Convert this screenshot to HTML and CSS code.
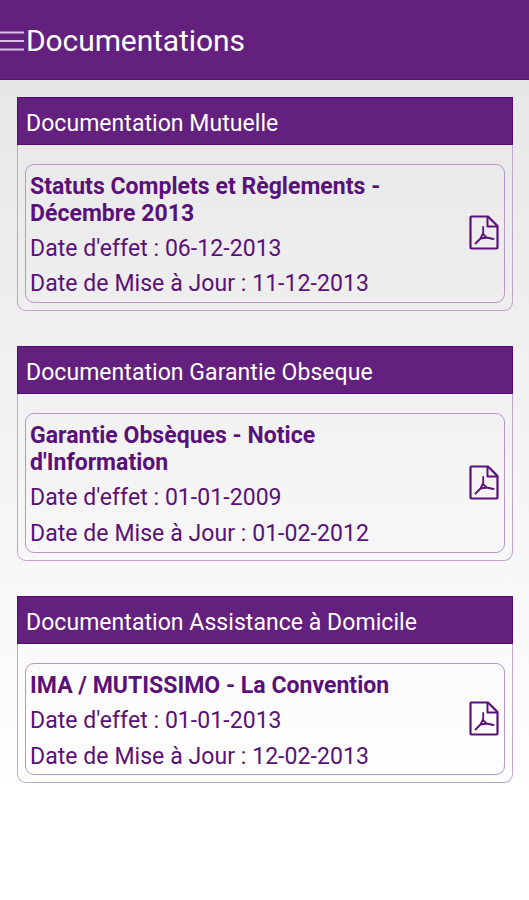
FILE: index.html
```
<!DOCTYPE html>
<html lang="fr">
<head>
    <meta charset="utf-8">
    <title>Documentations</title>
    <link rel="stylesheet" href="styles.css">
</head>
<body>
    <!-- PDF icon shared by all documents -->
    <svg class="sprite" width="0" height="0">
        <symbol id="pdf" viewBox="0 0 30 35">
            <path d="M2.500 1.500H19L28.500 11V32.500Q28.500 33.500 27.500 33.500H2.500Q1.500 33.500 1.500 32.500V2.500Q1.500 1.500 2.500 1.500Z" stroke-width="2.2"/>
            <path d="M18.500 2V11.500H28" stroke-width="2"/>
            <path d="M14.200 12V18L11.500 23.500L6.500 28.500M14.500 19.500L17.500 22.500L24.500 24M11.500 23.500L17.500 22.500" stroke-width="1.800" stroke-linecap="round"/>
        </symbol>
    </svg>

    <header class="topbar">
        <svg class="menu" width="24" height="22" viewBox="0 0 24 22">
            <path d="M0 2.500H24M0 11H24M0 19.500H24"/>
        </svg>
        <h1>Documentations</h1>
    </header>

    <main class="list">
        <section class="card">
            <h2>Documentation Mutuelle</h2>
            <div class="doc">
                <div class="doc-text">
                    <h3>Statuts Complets et Règlements -<br>Décembre 2013</h3>
                    <p>Date d'effet : 06-12-2013</p>
                    <p>Date de Mise à Jour : 11-12-2013</p>
                </div>
                <svg class="pdf"><use href="#pdf"/></svg>
            </div>
        </section>

        <section class="card">
            <h2>Documentation Garantie Obseque</h2>
            <div class="doc">
                <div class="doc-text">
                    <h3>Garantie Obsèques - Notice<br>d'Information</h3>
                    <p>Date d'effet : 01-01-2009</p>
                    <p>Date de Mise à Jour : 01-02-2012</p>
                </div>
                <svg class="pdf"><use href="#pdf"/></svg>
            </div>
        </section>

        <section class="card">
            <h2>Documentation Assistance à Domicile</h2>
            <div class="doc">
                <div class="doc-text">
                    <h3>IMA / MUTISSIMO - La Convention</h3>
                    <p>Date d'effet : 01-01-2013</p>
                    <p>Date de Mise à Jour : 12-02-2013</p>
                </div>
                <svg class="pdf"><use href="#pdf"/></svg>
            </div>
        </section>
    </main>
</body>
</html>
```

FILE: styles.css
```
* {
    box-sizing: border-box;
}
body {
    margin: 0;
    height: 900px;
    overflow: hidden;
    font-family: Roboto, sans-serif;
    color: #5a1079;
    background: linear-gradient(#e7e7e7 80px, #ffffff 800px);
}
h1, h2, h3, p {
    margin: 0;
    white-space: nowrap;
}
.sprite {
    position: absolute;
}
.topbar {
    display: flex;
    align-items: center;
    height: 80px;
    padding-top: 2px;
    background-color: #64207f;
    border-bottom: 1px solid #5a1376;
    color: #ffffff;
}
.topbar h1 {
    margin-left: 2px;
    font-size: 30px;
    font-weight: 400;
    letter-spacing: -0.1px;
}
.menu {
    fill: none;
    stroke: #d9bfe3;
    stroke-width: 2;
}
.list {
    display: flex;
    flex-direction: column;
    gap: 35px;
    padding: 17px 16px 0 17px;
}
.card {
    padding-bottom: 7px;
    border: 1px solid #c0a5cb;
    border-top: none;
    border-radius: 0 0 9px 9px;
}
.card h2 {
    height: 48px;
    margin: 0 -1px;
    padding-left: 8px;
    line-height: 51px;
    font-size: 23px;
    font-weight: 400;
    letter-spacing: 0.05px;
    color: #ffffff;
    background-color: #64207f;
    border: 1px solid #520d6e;
}
.doc {
    display: flex;
    align-items: center;
    justify-content: space-between;
    margin: 19px 7px 0 7px;
    padding: 9px 5px 4.5px 4px;
    border: 1px solid #b49ac0;
    border-radius: 9px;
}
.doc h3 {
    line-height: 26.5px;
    font-size: 23px;
    font-weight: 700;
    letter-spacing: 0.03px;
}
.doc p {
    margin-top: 9px;
    line-height: 26.4px;
    font-size: 23px;
    letter-spacing: 0.06px;
}
.pdf {
    flex: none;
    width: 30px;
    height: 35px;
    margin-bottom: 6px;
    fill: none;
    stroke: #5a1079;
    stroke-linejoin: round;
}
```
